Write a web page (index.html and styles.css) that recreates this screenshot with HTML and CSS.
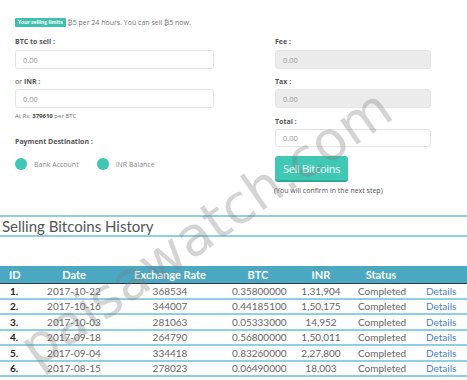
FILE: index.html
```html
<!DOCTYPE html>
<html lang="en">
<head>
  <meta charset="UTF-8">
  <title>Sell Bitcoins</title>
  <link rel="stylesheet" href="styles.css">
</head>
<body>

  <div class="page">
    <p class="limits"><span class="badge">Your selling limits</span> ₿5 per 24 hours. You can sell ₿5 now.</p>

    <div class="sell-form">
      <div class="col col-left">
        <label class="field-label">BTC to sell :</label>
        <input class="field" type="text" placeholder="0.00">

        <label class="field-label gap">or <b>INR :</b></label>
        <input class="field" type="text" placeholder="0.00">

        <p class="rate">At Rs: <b>379610</b> per BTC</p>

        <p class="field-label dest">Payment Destination :</p>
        <div class="radios">
          <span class="radio"></span><span class="radio-text">Bank Account</span>
          <span class="radio"></span><span class="radio-text">INR Balance</span>
        </div>
      </div>

      <div class="col col-right">
        <label class="field-label">Fee :</label>
        <input class="field readonly" type="text" placeholder="0.00" readonly>

        <label class="field-label gap">Tax :</label>
        <input class="field readonly" type="text" placeholder="0.00" readonly>

        <label class="field-label total">Total :</label>
        <input class="field small" type="text" placeholder="0.00">

        <button class="sell-btn">Sell Bitcoins</button>
        <p class="note">(You will confirm in the next step)</p>
      </div>
    </div>

    <h3 class="history-title">Selling Bitcoins History</h3>

    <table class="history">
      <colgroup>
        <col style="width:40px"><col style="width:68px"><col style="width:124px">
        <col style="width:52px"><col style="width:74px"><col style="width:46px"><col>
      </colgroup>
      <thead>
        <tr><th class="id">ID</th><th>Date</th><th>Exchange Rate</th><th>BTC</th><th>INR</th><th>Status</th><th></th></tr>
      </thead>
      <tbody>
        <tr><td class="id">1.</td><td>2017-10-22</td><td>368534</td><td>0.35800000</td><td>1,31,904</td><td>Completed</td><td class="link"><a href="#">Details</a></td></tr>
        <tr><td class="id">2.</td><td>2017-10-16</td><td>344007</td><td>0.44185100</td><td>1,50,175</td><td>Completed</td><td class="link"><a href="#">Details</a></td></tr>
        <tr><td class="id">3.</td><td>2017-10-03</td><td>281063</td><td>0.05333000</td><td>14,952</td><td>Completed</td><td class="link"><a href="#">Details</a></td></tr>
        <tr><td class="id">4.</td><td>2017-09-18</td><td>264790</td><td>0.56800000</td><td>1,50,011</td><td>Completed</td><td class="link"><a href="#">Details</a></td></tr>
        <tr><td class="id">5.</td><td>2017-09-04</td><td>334418</td><td>0.83260000</td><td>2,27,800</td><td>Completed</td><td class="link"><a href="#">Details</a></td></tr>
        <tr><td class="id">6.</td><td>2017-08-15</td><td>278023</td><td>0.06490000</td><td>18,003</td><td>Completed</td><td class="link"><a href="#">Details</a></td></tr>
      </tbody>
    </table>

    <div class="watermark">paisawatch.com</div>
  </div>

</body>
</html>
```

FILE: styles.css
```css
* {
  box-sizing: border-box;
}

body {
  margin: 0;
  background: #fff;
  font-family: 'Open Sans', sans-serif;
  color: #666;
  overflow: hidden;
}
.page {
  position: relative;
  width: 467px;
  height: 380px;
  overflow: hidden;
}

/* limits line */
.limits {
  margin: 18px 0 0 15px;
  height: 9px;
  line-height: 9px;
  font-size: 7px;
  color: #777;
  white-space: nowrap;
}
.badge {
  display: inline-block;
  background: #3cc2ad;
  color: #fff;
  font-weight: bold;
  font-size: 5px;
  padding: 0 3px;
  height: 9px;
  line-height: 9px;
  border-radius: 1px;
  vertical-align: top;
}

/* form */
.sell-form {
  display: flex;
  gap: 61px;
  padding-left: 15px;
  margin-top: 10px;
}
.col {
  display: flex;
  flex-direction: column;
}
.col-left {
  width: 199px;
}
.col-right {
  width: 156px;
}
.field-label {
  margin: 0 0 3px;
  height: 10px;
  line-height: 10px;
  font-size: 7px;
  font-weight: bold;
  color: #555;
}
.field-label.gap {
  margin-top: 8px;
  margin-bottom: 2px;
  font-weight: normal;
}
.col-right .field-label.gap {
  font-weight: bold;
}
.field-label b {
  font-weight: bold;
}
.field-label.total {
  margin-top: 9px;
  margin-bottom: 2px;
}
.field {
  width: 100%;
  height: 19px;
  padding: 0 7px;
  border: 1px solid #e4e4e4;
  border-radius: 3px;
  font-family: inherit;
  font-size: 7.5px;
  color: #555;
  background: #fff;
  outline: none;
}
.field::placeholder {
  color: #999;
}
.field.readonly {
  background: #ececec;
  border-color: #e6e6e6;
}
.field.small {
  height: 18px;
}
.rate {
  margin: 4px 0 0;
  height: 9px;
  line-height: 9px;
  font-size: 6px;
  color: #777;
}
.rate b {
  color: #444;
}
.field-label.dest {
  margin: 16px 0 0;
}
.radios {
  display: flex;
  align-items: center;
  margin-top: 11px;
  height: 12px;
  font-size: 7px;
  color: #888;
}
.radio {
  width: 12px;
  height: 12px;
  border-radius: 50%;
  background: #3cc8b4;
  margin-right: 7px;
}
.radio-text {
  margin-right: 18px;
}

.sell-btn {
  align-self: flex-start;
  margin-top: 9px;
  width: 73px;
  height: 26px;
  padding: 0;
  border: none;
  border-bottom: 2px solid #2ea898;
  border-radius: 3px;
  background: #3fc9b5;
  color: #fff;
  font-family: inherit;
  font-size: 11px;
  letter-spacing: -0.3px;
  cursor: pointer;
}
.note {
  margin: 4px 0 0 -1px;
  height: 10px;
  line-height: 10px;
  font-size: 7px;
  color: #555;
  white-space: nowrap;
}

/* history */
.history-title {
  margin: 19px 0 0;
  height: 22px;
  line-height: 18px;
  padding-left: 2px;
  border-top: 2px solid #8fd0e2;
  border-bottom: 2px solid #8fd0e2;
  font-family: 'Lato', sans-serif;
  font-weight: normal;
  font-size: 15px;
  color: #555;
}

.history {
  width: 467px;
  margin-top: 29px;
  border-collapse: collapse;
  table-layout: fixed;
  font-family: 'Lato', sans-serif;
  font-size: 10px;
}
.history th {
  height: 17px;
  padding: 0;
  background: #4aa8c3;
  color: #fff;
  font-weight: bold;
  font-size: 11px;
  text-align: center;
  border-bottom: 1px solid #2b3a40;
}
.history td {
  height: 15.5px;
  padding: 0;
  text-align: center;
  color: #666;
  border-bottom: 2px solid #8ed0e2;
}
.history .id {
  text-align: left;
  padding-left: 9px;
}
.history td.id {
  padding-left: 10px;
  color: #222;
  font-weight: bold;
}
.history td.link {
  text-align: left;
  padding-left: 22px;
}
.history a {
  color: #4a7fd0;
  text-decoration: none;
}

/* watermark over the page */
.watermark {
  position: absolute;
  left: 42px;
  top: 322px;
  transform-origin: 0 100%;
  transform: rotate(-35deg);
  font-family: 'DejaVu Sans', sans-serif;
  font-size: 54px;
  line-height: 54px;
  color: rgba(120, 120, 120, 0.32);
  white-space: nowrap;
  pointer-events: none;
}
```
